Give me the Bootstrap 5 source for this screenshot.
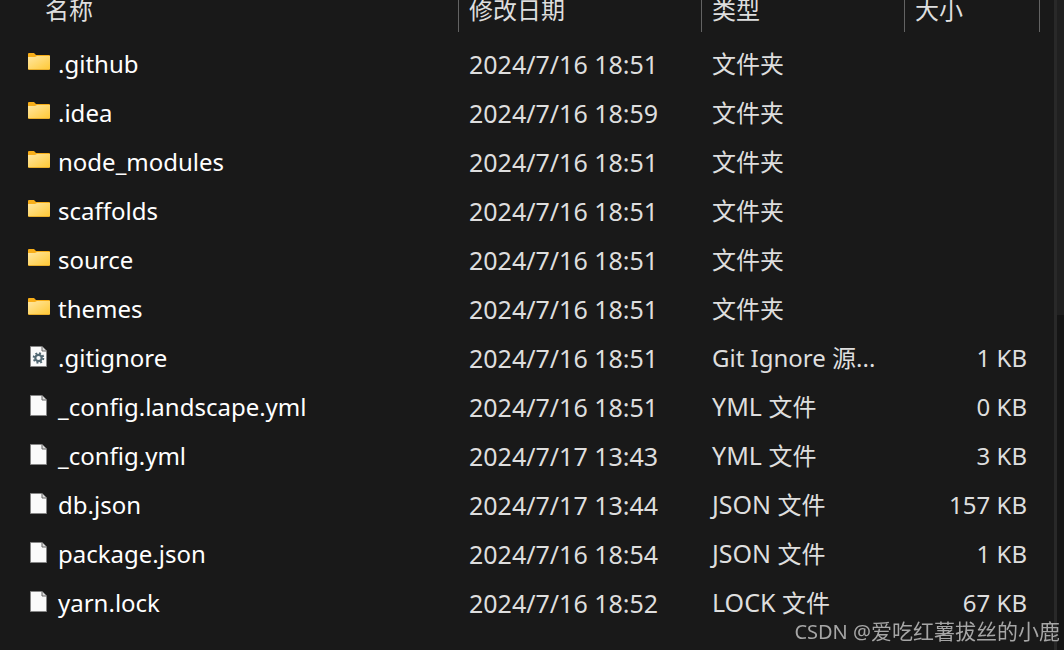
<!DOCTYPE html>
<html lang="zh-CN" data-bs-theme="dark">
<head>
<meta charset="utf-8">
<meta name="viewport" content="width=device-width, initial-scale=1">
<title>文件</title>
<link href="https://cdn.jsdelivr.net/npm/bootstrap@5.3.0/dist/css/bootstrap.min.css" rel="stylesheet">
<style>
body{background:#191919;font-family:"Noto Sans","Noto Sans CJK SC",sans-serif;font-size:24px;line-height:32px;color:#dedede}
.file-pane{padding-right:14px}
.file-table{table-layout:fixed;white-space:nowrap}
.file-table th{height:40px;padding:0;font-weight:400;vertical-align:top}
.head-cell{height:32px;line-height:20px;border-right:1px solid #636363;padding-left:10px}
.file-table th:first-child .head-cell{padding-left:45px}
.file-table td{height:49px;padding:0 0 2px 10px;vertical-align:middle}
.file-table td:first-child{padding-left:27px;color:#fff}
.file-table td:last-child{padding-right:13px}
.file-table td:nth-child(2),.kind-code{font-size:25px}
.col-date{width:243px}.col-type{width:203px}.col-size{width:135px}
.file-name{gap:7px}
.file-name svg{width:24px;height:24px;flex:none;margin-top:3px}
.side-edge{width:3px;background:#292929}
.side-panel{width:7px;background:#151515}
.side-top{height:315px;background:#202020}
.credit{right:4px;bottom:4px;font-size:21px;line-height:28px;color:#a6a6a6}
.credit-site{font-size:20px}
</style>
</head>
<body>
<svg class="position-absolute" width="0" height="0" aria-hidden="true">
<defs>
<linearGradient id="gold" x1="0" y1="0" x2="1" y2="1"><stop stop-color="#ffe7a2"/><stop offset="1" stop-color="#ffc937"/></linearGradient>
<symbol id="folder" viewBox="0 0 24 24"><path d="M1 12V3q0-1 1-1h5l2 2h13q1 0 1 1v6z" fill="#f8ae18"/><path d="M1 6h7l2-1h13v13q0 1-1 1H2q-1 0-1-1z" fill="#e9ae2b"/><path d="M1 6h7l2-1h13v13H1z" fill="url(#gold)"/></symbol>
<symbol id="page" viewBox="0 0 24 24"><path d="M3.500 1.500h11.500l4.500 4.500v15.500h-16z" fill="#fafafa" stroke="#858585"/><path d="M15 1.500V6h4.500" fill="#ddd" stroke="#666"/></symbol>
<symbol id="gear" viewBox="0 0 24 24"><use href="#page"/><circle cx="11.500" cy="13" r="4.800" fill="none" stroke="#526873" stroke-width="2" stroke-dasharray="1.900 1.870"/><circle cx="11.500" cy="13" r="3.200" fill="none" stroke="#526873" stroke-width="2.200"/></symbol>
</defs>
</svg>
<div class="d-flex min-vh-100 overflow-hidden">
<main class="file-pane flex-grow-1">
<table class="file-table w-100">
<colgroup><col><col class="col-date"><col class="col-type"><col class="col-size"></colgroup>
<thead><tr><th scope="col"><div class="head-cell">名称</div></th><th scope="col"><div class="head-cell">修改日期</div></th><th scope="col"><div class="head-cell">类型</div></th><th scope="col"><div class="head-cell">大小</div></th></tr></thead>
<tbody id="files"></tbody>
</table>
</main>
<div class="side-edge flex-shrink-0"></div>
<div class="side-panel flex-shrink-0"><div class="side-top"></div></div>
</div>
<div class="credit position-fixed"><span class="credit-site">CSDN @</span>爱吃红薯拔丝的小鹿</div>
<script>
const kind = code => `<span class="kind-code">${code} </span>文件`;
const files = [
["folder",".github","2024/7/16 18:51","文件夹",""],
["folder",".idea","2024/7/16 18:59","文件夹",""],
["folder","node_modules","2024/7/16 18:51","文件夹",""],
["folder","scaffolds","2024/7/16 18:51","文件夹",""],
["folder","source","2024/7/16 18:51","文件夹",""],
["folder","themes","2024/7/16 18:51","文件夹",""],
["gear",".gitignore","2024/7/16 18:51","Git Ignore 源...","1 KB"],
["page","_config.landscape.yml","2024/7/16 18:51",kind("YML"),"0 KB"],
["page","_config.yml","2024/7/17 13:43",kind("YML"),"3 KB"],
["page","db.json","2024/7/17 13:44",kind("JSON"),"157 KB"],
["page","package.json","2024/7/16 18:54",kind("JSON"),"1 KB"],
["page","yarn.lock","2024/7/16 18:52",kind("LOCK"),"67 KB"]
];
document.getElementById("files").innerHTML = files.map(([icon,name,date,type,size]) =>
`<tr><td><div class="file-name d-flex"><svg aria-hidden="true"><use href="#${icon}"/></svg><span>${name}</span></div></td><td>${date}</td><td>${type}</td><td class="text-end">${size}</td></tr>`).join("");
</script>
<script src="https://cdn.jsdelivr.net/npm/bootstrap@5.3.0/dist/js/bootstrap.bundle.min.js"></script>
</body>
</html>
